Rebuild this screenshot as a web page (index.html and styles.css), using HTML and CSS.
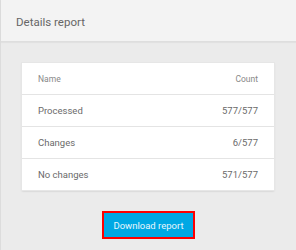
FILE: index.html
```html
<!DOCTYPE html>
<html>
<head>
<meta charset="utf-8">
<link rel="stylesheet" href="styles.css">
</head>
<body>
<div class="panel">
  <header class="panel-header">
    <h1 class="title">Details report</h1>
  </header>
  <main class="panel-body">
    <div class="card">
      <div class="row row-head"><span>Name</span><span>Count</span></div>
      <div class="row"><span>Processed</span><span>577/577</span></div>
      <div class="row"><span>Changes</span><span>6/577</span></div>
      <div class="row"><span>No changes</span><span>571/577</span></div>
    </div>
    <div class="actions">
      <button class="btn">Download report</button>
    </div>
  </main>
</div>
</body>
</html>
```

FILE: styles.css
```css
html, body {
  margin: 0;
  padding: 0;
  width: 296px;
  height: 250px;
  overflow: hidden;
  background: #ebebeb;
  font-family: Roboto, "Liberation Sans", sans-serif;
}
.panel {
  height: 250px;
  border-left: 1px solid #dcdcdc;
  box-sizing: border-box;
  background: #ebebeb;
  display: flex;
  flex-direction: column;
}
.panel-header {
  height: 42px;
  box-sizing: border-box;
  background: #f3f3f3;
  border-bottom: 1px solid #dedede;
  box-shadow: 0 1px 1px rgba(0,0,0,0.04);
  display: flex;
  align-items: center;
  padding: 3px 0 0 15px;
}
.title {
  margin: 0;
  font-size: 11.5px;
  font-weight: 400;
  color: #666;
}
.panel-body {
  padding: 21px 22px 0 21px;
  display: flex;
  flex-direction: column;
}
.card {
  background: #fff;
  box-shadow: 0 0 0 1px #e6e6e6, 0 1px 2px rgba(0,0,0,0.2);
}
.row {
  height: 31px;
  display: flex;
  justify-content: space-between;
  align-items: center;
  padding: 0 16px;
  font-size: 9.5px;
  color: #6a6a6a;
  border-top: 1px solid #e4e4e4;
}
.row-head {
  border-top: none;
  font-size: 8.5px;
  color: #888;
}
.actions {
  display: flex;
  justify-content: center;
  padding-top: 21px;
}
.btn {
  font-family: inherit;
  font-size: 9.5px;
  color: #e8f7fd;
  background: #00a8e4;
  border: 2px solid #f00;
  height: 28px;
  padding: 0 9px;
  margin-left: 1px;
  cursor: pointer;
}
```
